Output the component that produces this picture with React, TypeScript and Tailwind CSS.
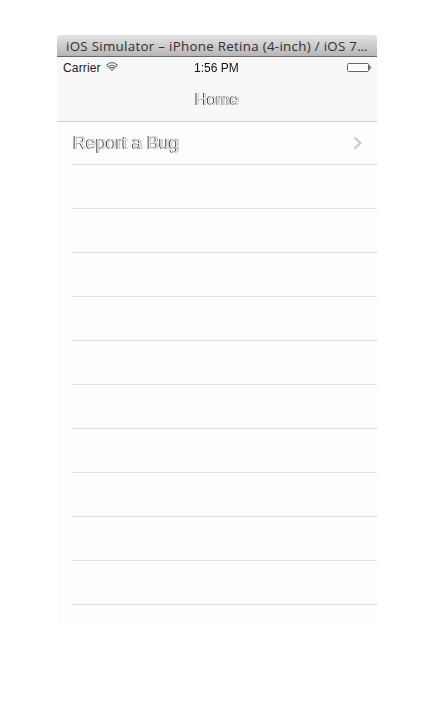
const rows = Array.from({ length: 10 }, (_, i) => i);

function Wifi() {
  return (
    <svg width="12" height="9" viewBox="0 0 12 9" className="ml-[5px] mt-[5px]" fill="none" stroke="#222" strokeWidth="0.8">
      <path d="M0.6 3.1Q6 -1.9 11.4 3.1L6 8.4Z" fill="#fff" />
      <path d="M2.6 4.4Q6 2 9.4 4.4M4.2 6Q6 4.8 7.8 6" />
    </svg>
  );
}

function Battery() {
  return (
    <svg width="25" height="10" viewBox="0 0 25 10" className="mt-[6px]" fill="none">
      <rect x="0.5" y="0.5" width="21" height="8" rx="1" fill="#fff" stroke="#666" />
      <path d="M22.5 2.5Q25 4.5 22.5 6.5Z" fill="#aaa" stroke="#555" strokeWidth="0.7" />
    </svg>
  );
}

export default function App() {
  return (
    <div className="h-[704px] w-[434px] overflow-hidden bg-white pl-[57px] pt-[35px] font-['Liberation_Sans',Arial,sans-serif] text-[#222]">
      <div className="flex h-[589px] w-[320px] flex-col bg-[#fdfdfd]">
        <div className="flex h-[22px] shrink-0 items-center rounded-t-[4px] border-b border-[#686868] bg-linear-to-b from-[#e4e4e4] to-[#b6b6b6] pl-[9px] pt-[2px]">
          <span className="whitespace-nowrap font-['Open_Sans','Noto_Sans',sans-serif] text-[13.3px] tracking-[0.31px] text-[#303030]">
            iOS Simulator – iPhone Retina (4-inch) / iOS 7…
          </span>
        </div>
        <div className="flex h-[65px] shrink-0 flex-col border-b border-[#d2d2d2] bg-[#f8f8f8]">
          <div className="grid h-5 grid-cols-3 text-[12px] leading-[22px]">
            <div className="flex pl-[6px]">
              <span className="tracking-[0.15px]">Carrier</span>
              <Wifi />
            </div>
            <div className="pr-[2px] text-center text-[#111] will-change-transform">1:56 PM</div>
            <div className="flex justify-end pr-[5px]">
              <Battery />
            </div>
          </div>
          <h1 className="pt-[11px] text-center text-[16.5px] leading-[22px] text-[#eee] will-change-transform [text-shadow:-0.7px_-0.3px_#000,0.6px_0.3px_#aaa]">Home</h1>
        </div>
        <div className="ml-[15px] flex h-[43px] shrink-0 items-center justify-between border-b border-[#e0e0e0] pr-[14px]">
          <span className="pl-px text-[18px] text-[#eee] will-change-transform [text-shadow:-0.7px_-0.3px_#000,0.6px_0.3px_#aaa]">Report a Bug</span>
          <svg width="10" height="14" viewBox="0 0 10 14" fill="none" stroke="#c7c7cc" strokeWidth="2">
            <path d="M1.5 1.5L7.5 7L1.5 12.5" />
          </svg>
        </div>
        {rows.map((row) => (
          <div key={row} className="ml-[15px] h-11 shrink-0 border-b border-[#e0e0e0]" />
        ))}
      </div>
    </div>
  );
}
